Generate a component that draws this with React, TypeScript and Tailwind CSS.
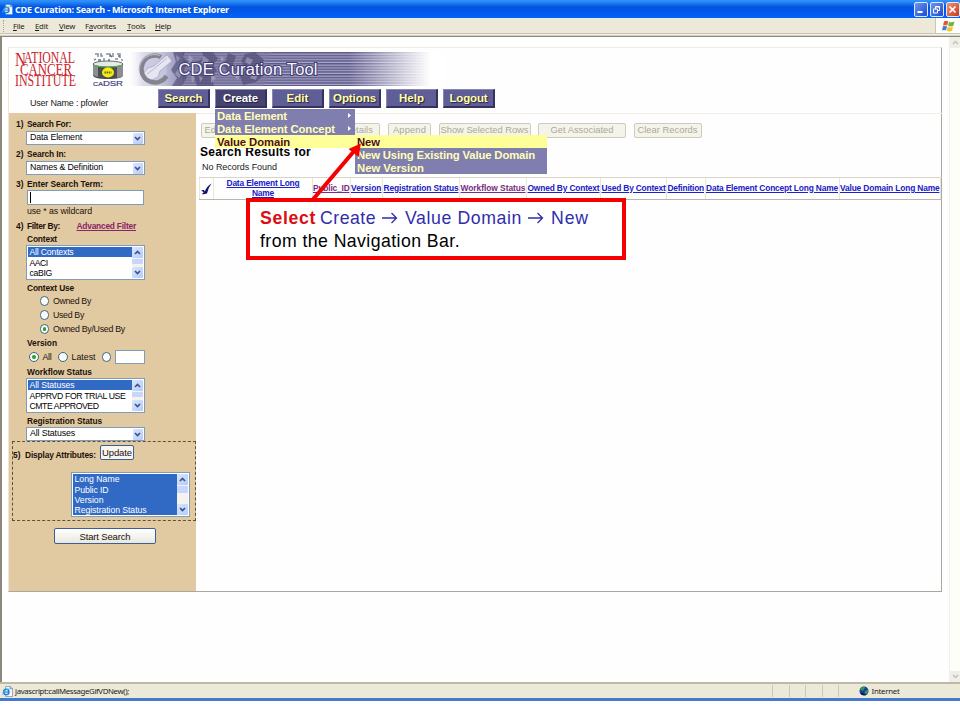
import React, { useLayoutEffect, useRef } from "react";

const clsArial = "font-['Liberation_Sans',Arial,sans-serif]";
const clsTahoma = "font-['Noto_Sans','Open_Sans',sans-serif]";

/* A single line of text tracked so that it fills exactly `w` pixels. */
function Fit({ w, className = "", children }: { w: number; className?: string; children: string }) {
  const ref = useRef<HTMLSpanElement>(null);
  useLayoutEffect(() => {
    const el = ref.current;
    if (!el) return;
    el.style.letterSpacing = "0px";
    const natural = el.getBoundingClientRect().width;
    el.style.letterSpacing = `${(w - natural) / children.length}px`;
  }, [w, children]);
  return (
    <span ref={ref} className={`inline-block whitespace-pre ${className}`}>
      {children}
    </span>
  );
}

function IeIcon({ size }: { size: number }) {
  return (
    <svg width={size} height={size} viewBox="0 0 12 12" className="shrink-0">
      <path d="M4 .5h5L11.500 3v8.500H4z" fill="#f4f8ff" stroke="#5b7fbf" strokeWidth=".7" />
      <path d="M9 .5V3h2.500" fill="#c5d5f0" stroke="#3b62ad" strokeWidth=".6" />
      <circle cx="4.700" cy="6.500" r="2.900" fill="#e8f4ff" stroke="#1f7fd6" strokeWidth="1.600" />
      <path d="M2 6.600h5.500" stroke="#1f7fd6" strokeWidth="1.300" />
      <path d="M.6 9.500C1 6 4 3.500 8.500 3" fill="none" stroke="#49b6ea" strokeWidth=".8" />
    </svg>
  );
}

function TitleBar() {
  const box = "flex h-[15px] w-[14.5px] items-center justify-center rounded-[2px] border border-[#dfe9fb]";
  return (
    <div className="flex h-[18px] shrink-0 items-center bg-linear-to-b from-[#2f90fb] from-5% via-[#0353de] via-40% to-[#0363fb] pl-[2px]">
      <IeIcon size={11} />
      <Fit w={214} className="ml-[2px] font-['Open_Sans',sans-serif] text-[9px] font-bold leading-[17px] text-white">
        CDE Curation: Search - Microsoft Internet Explorer
      </Fit>
      <div className="ml-auto flex gap-[1.500px]">
        <div className={`${box} bg-linear-to-br from-[#6d95f0] to-[#1c49cf]`}>
          <svg width="11" height="11"><path d="M2.500 8h5" stroke="#fff" strokeWidth="2" /></svg>
        </div>
        <div className={`${box} bg-linear-to-br from-[#6d95f0] to-[#1c49cf]`}>
          <svg width="11" height="11" fill="none" stroke="#fff" strokeWidth="1">
            <path d="M2.500 5h4v4h-4zM4.500 5V2.500h4v4H6.500M4.500 3h4" />
          </svg>
        </div>
        <div className={`${box} bg-linear-to-br from-[#ee9274] to-[#c93413]`}>
          <svg width="11" height="11"><path d="M2.500 2.500l6 6M8.500 2.500l-6 6" stroke="#fff" strokeWidth="1.700" /></svg>
        </div>
      </div>
    </div>
  );
}

const menus: [string, string, string, number][] = [
  ["", "F", "ile", 11],
  ["", "E", "dit", 13],
  ["", "V", "iew", 15],
  ["F", "a", "vorites", 31],
  ["", "T", "ools", 17],
  ["", "H", "elp", 15],
];

function MenuBar() {
  return (
    <div className="flex h-[19px] shrink-0 flex-col bg-[#ece9d8]">
      <div className="flex h-[15px] items-center">
        <div className="ml-[3px] h-[12px] w-px border-l border-dotted border-[#a9a595]" />
        <div className={`flex ${clsTahoma} ml-[9px] gap-[11px] text-[7.800px] leading-[14px] text-[#1b1b1b]`}>
          {menus.map(([a, b, c, w]) => (
            <span key={b} className="flex whitespace-nowrap tracking-[-0.250px]" style={{ width: w }}>
              {a}
              <u>{b}</u>
              {c}
            </span>
          ))}
        </div>
        <div className="ml-auto flex h-[15px] w-[25px] items-center justify-center border-l border-[#c9c6b6] bg-white">
          <svg width="13" height="12" viewBox="0 0 13 12">
            <path d="M2 1.500Q4 .2 6.200 1.500L5.200 5.500Q3 4.500 1 5.500z" fill="#e8552b" />
            <path d="M7 1.800Q9.500 3 12.500 1.600L11.300 6Q9 7 6 5.800z" fill="#6fb63c" />
            <path d="M.9 6.300Q3 5.300 5 6.400L4 10.500Q2 9.500 0 10.500z" fill="#3f7de0" />
            <path d="M5.800 6.700Q8.300 8 11 6.800L9.900 11Q7.500 12 4.800 10.800z" fill="#f7c520" />
          </svg>
        </div>
      </div>
      <div className="h-px bg-[#c9c5b6]" />
      <div className="h-px bg-[#f3f0e4]" />
      <div className="h-px bg-[#d8d4c4]" />
      <div className="h-px bg-[#8b887c]" />
    </div>
  );
}

function NciLogo() {
  return (
    <svg width="62" height="36" viewBox="0 0 62 36" fill="#c9252d" fontFamily="'Liberation Serif', serif" className="shrink-0 overflow-visible">
      <text x="0" y="14" fontSize="19" textLength="11" lengthAdjust="spacingAndGlyphs">N</text>
      <text x="9" y="11.300" fontSize="16" textLength="51" lengthAdjust="spacingAndGlyphs">ATIONAL</text>
      <text x="5" y="23" fontSize="17.500" textLength="52" lengthAdjust="spacingAndGlyphs">CANCER</text>
      <text x="0" y="34" fontSize="16" textLength="61" lengthAdjust="spacingAndGlyphs">INSTITUTE</text>
    </svg>
  );
}

function CadsrLogo() {
  return (
    <svg width="34" height="36" viewBox="0 0 34 36" className="shrink-0 overflow-visible">
      <g fill="none" strokeWidth="1.500">
        <path d="M4 2h3v3M10 1v3h2M15 2h4v3M22 1v4M26 2h3v4M3 8l2-1M30 8h2M13 6v3M24 7h3" stroke="#8b8e9a" />
        <path d="M7 8h3M18 7v2M28 3v2M19 3l2 2" stroke="#57719a" />
      </g>
      <path d="M2 12v11q0 4 15 4t15-4V12z" fill="#4b4d4f" />
      <path d="M2 12v10q0 2 5 3V13zM26 14v12q6-1 6-3V12z" fill="#8c8e90" />
      <ellipse cx="17" cy="12" rx="15" ry="3" fill="#e4ebe4" stroke="#3f4a40" strokeWidth=".8" />
      <path d="M3 13.500q14 3.500 28 0" fill="none" stroke="#58b648" strokeWidth="1.200" />
      <ellipse cx="17" cy="20.500" rx="6" ry="5" fill="#f5ec16" />
      <path d="M13.500 20.500h7" stroke="#6c6a16" strokeWidth="2" strokeDasharray="1.500 .6" />
      <text x="2" y="34" fontSize="8" fontFamily="'Liberation Sans', sans-serif" fill="#3b3b80" stroke="#3b3b80" strokeWidth=".2" textLength="30" lengthAdjust="spacingAndGlyphs">
        <tspan fontSize="6">CA</tspan>DSR
      </text>
    </svg>
  );
}

function Banner() {
  return (
    <svg width="316" height="34" viewBox="0 0 316 34" className="shrink-0">
      <defs>
        <pattern id="stripes" width="4" height="2.750" patternUnits="userSpaceOnUse">
          <rect width="4" height="2.750" fill="#a9a6c8" />
          <rect width="4" height="1.500" fill="#5d5988" />
        </pattern>
        <linearGradient id="left">
          <stop offset="0" stopColor="#f0eff7" />
          <stop offset=".6" stopColor="#c3c3dc" />
          <stop offset="1" stopColor="#8f8db4" />
        </linearGradient>
        <linearGradient id="fade">
          <stop offset="0" stopColor="#fff" stopOpacity="0" />
          <stop offset=".85" stopColor="#fff" />
        </linearGradient>
        <linearGradient id="edge">
          <stop offset="0" stopColor="#fff" />
          <stop offset="1" stopColor="#fff" stopOpacity="0" />
        </linearGradient>
      </defs>
      <rect width="316" height="34" fill="url(#stripes)" />
      <rect width="54" height="34" fill="url(#left)" />
      <rect width="14" height="34" fill="url(#edge)" />
      <path d="M54 0h90l-8 10 6 12-8 12H54z" fill="#7f7ca2" opacity=".55" />
      <g fill="#4b4770" opacity=".6">
        <path d="M44 0l12 0-2 5 5 5-4 8 3 7-5 9H43l5-8-6-8 5-8z" />
        <path d="M73 0h11l5 7-5 5 4 7-6 5 3 10H68l-3-9 5-7-3-8 8-4z" />
        <path d="M99 1l8 3-3 8 4 6-9 4-4-8z" />
        <path d="M116 2l10-2 9 8-4 6 4 9-8 7-13 3-3-9 6-7-5-8z" />
      </g>
      <g fill="#b4b1ca" opacity=".55">
        <path d="M47 3l4 3-3 4zM49 17l4 4-3 5-4-4zM75 4l5 4-3 6-5-3zM82 22l5 4-5 5zM70 24l4 2-3 4zM118 5l6 3-3 5-5-3zM124 21l5-1-2 8-6-2zM60 3l4 3-2 5-3-3zM91 4l4 2-2 5zM105 24l6-3-2 7zM62 23l4 3-3 5z" />
      </g>
      <circle cx="25" cy="17" r="13" fill="#c9c8df" opacity=".7" />
      <path d="M13 23l6-7 6-2 13-11 5 6-12 10-2 6-8 4z" fill="#e6e5f1" stroke="#a2a0bf" strokeWidth=".7" />
      <path d="M18 22l8-6 12-10" fill="none" stroke="#b8b6d0" strokeWidth="1" />
      <path d="M32 5A13.500 13.500 0 1 0 37.500 24" fill="none" stroke="#84848e" strokeWidth="4.500" />
      <path d="M31 3.500A15 15 0 0 0 10.500 19" fill="none" stroke="#b5b5c0" strokeWidth="1.300" />
      <rect x="220" width="96" height="34" fill="url(#fade)" />
      <g fontFamily="'Liberation Sans', Arial, sans-serif" fontSize="16.500">
        <text
          x="49.500"
          y="22.500"
          fill="#f8f7ff"
          stroke="#403c70"
          strokeWidth="2"
          paintOrder="stroke"
          textLength="139"
        >
          CDE Curation Tool
        </text>
      </g>
    </svg>
  );
}

const nav: [string, number][] = [
  ["Search", 38],
  ["Create", 35],
  ["Edit", 22],
  ["Options", 43],
  ["Help", 25],
  ["Logout", 38],
];

function NavBar() {
  return (
    <div className="flex h-[19px] gap-[5px]">
      {nav.map(([label, w]) => (
        <div
          key={label}
          className={`flex w-[52px] items-center justify-center border-t border-r-2 border-b-2 border-l border-t-[#8886b2] border-l-[#8886b2] border-r-[#35335e] border-b-[#35335e] ${
            label === "Create" ? "bg-[#45436f] text-white" : "bg-[#605e96] text-[#ffffa5]"
          }`}
        >
          <Fit w={w} className="text-[11.500px] font-bold leading-[15px] [text-shadow:1px_1px_1px_#222045]">
            {label}
          </Fit>
        </div>
      ))}
    </div>
  );
}

function MenuRow({ label, w, hot, arrow }: { label: string; w: number; hot?: boolean; arrow?: boolean }) {
  return (
    <div className={`flex h-[13px] items-center pl-[2px] ${hot ? "bg-[#ffff99] text-[#4d1016]" : "bg-[#807eae] text-[#ffffb5]"}`}>
      <Fit w={w} className="text-[11.300px] font-bold leading-[12px]">{label}</Fit>
      {arrow && (
        <svg width="3" height="5" className="mr-[4px] ml-auto">
          <path d="M0 0L3 2.500L0 5z" fill="#fff" />
        </svg>
      )}
    </div>
  );
}

function CreateMenu() {
  return (
    <div className="absolute top-[109px] left-[215px] z-10 flex items-end">
      <div className="mb-[26px] w-[140px]">
        <MenuRow label="Data Element" w={70} arrow />
        <MenuRow label="Data Element Concept" w={118} arrow />
        <MenuRow label="Value Domain" w={73} hot />
      </div>
      <div className="w-[192px]">
        <MenuRow label="New" w={23} hot />
        <MenuRow label="New Using Existing Value Domain" w={178} />
        <MenuRow label="New Version" w={67} />
      </div>
    </div>
  );
}

function Chevron({ up = false }: { up?: boolean }) {
  return (
    <span className="flex h-[11px] w-full shrink-0 items-center justify-center rounded-[1px] bg-linear-to-br from-[#dbe6fe] to-[#b3cbfb]">
      <svg width="7" height="5" fill="none" stroke="#3d5486" strokeWidth="1.700">
        <path d={up ? "M1 4L3.500 1.500L6 4" : "M1 1L3.500 3.500L6 1"} />
      </svg>
    </span>
  );
}

function Select({ text, w }: { text: string; w: number }) {
  return (
    <div className="ml-[17px] flex h-[14px] w-[119px] items-center border border-[#7f9db9] bg-white pr-px pl-[3px]">
      <Fit w={w} className="mb-px text-[8.800px] leading-[11px] text-black">{text}</Fit>
      <span className="ml-auto w-[10.500px]"><Chevron /></span>
    </div>
  );
}

function ListBox({ items, className, all }: { items: [string, number][]; className: string; all?: boolean }) {
  return (
    <div className={`flex border border-[#7f9db9] bg-white p-px ${className}`}>
      <div className="grow overflow-hidden">
        {items.map(([t, w], i) => (
          <div key={t} className={`flex h-[10.350px] items-center pl-[1.500px] ${all || i === 0 ? "bg-[#316ac5] text-white" : "text-black"}`}>
            <Fit w={w} className="text-[8.700px] leading-[10px]">{t}</Fit>
          </div>
        ))}
      </div>
      <div className="flex w-[11px] flex-col bg-[#f4f3ee]">
        <Chevron up />
        <span className={`mt-px rounded-[1px] bg-[#c6d6fc] ${all ? "h-[7px]" : "h-[5px]"}`} />
        <span className="mt-auto"><Chevron /></span>
      </div>
    </div>
  );
}

function Label({ text, w, className = "" }: { text: string; w: number; className?: string }) {
  return (
    <div className={`flex h-[11px] items-center ${className}`}>
      <Fit w={w} className="text-[8.400px] font-bold leading-[11px]">{text}</Fit>
    </div>
  );
}

function Numbered({ n, text, w, className = "" }: { n: string; text: string; w: number; className?: string }) {
  return (
    <div className={`flex pl-[7px] ${className}`}>
      <Label text={n} w={7.5} className="w-[11px]" />
      <Label text={text} w={w} />
    </div>
  );
}

function Radio({ on }: { on?: boolean }) {
  return (
    <span className="flex size-[9.500px] shrink-0 items-center justify-center rounded-full border border-[#3b6583] bg-[#fbfbf8]">
      {on && <span className="size-[3.500px] rounded-full bg-[#22a122]" />}
    </span>
  );
}

function RadioRow({ text, w, on }: { text: string; w: number; on?: boolean }) {
  return (
    <div className="flex h-[14px] items-center pl-[30.500px]">
      <Radio on={on} />
      <Fit w={w} className="ml-[4px] text-[8.800px] leading-[12px]">{text}</Fit>
    </div>
  );
}

function Sidebar() {
  return (
    <div className="flex h-full w-[186.500px] shrink-0 flex-col bg-[#e1c9a2] text-[#1c130a]">
      <Numbered n="1)" text="Search For:" w={44} className="mt-[6px] mb-px" />
      <Select text="Data Element" w={52} />
      <Numbered n="2)" text="Search In:" w={39} className="mt-[4px] mb-px" />
      <Select text="Names & Definition" w={73} />
      <Numbered n="3)" text="Enter Search Term:" w={76} className="mt-[4px]" />
      <div className="ml-[18px] flex h-[15px] w-[117px] items-center border border-[#7f9db9] bg-white pl-[2px]">
        <span className="h-[11px] w-px bg-black" />
      </div>
      <div className="flex h-[12px] items-center pl-[18px]">
        <Fit w={65} className="text-[8.800px] leading-[12px]">use * as wildcard</Fit>
      </div>
      <div className="mt-[4px] flex">
        <Numbered n="4)" text="Filter By:" w={33} />
        <Label text="Advanced Filter" w={59.5} className="ml-[16.500px] text-[#8b2467] underline" />
      </div>
      <Label text="Context" w={30} className="mt-[2px] ml-[18px]" />
      <ListBox className="ml-[17px] h-[35px] w-[119px]" items={[["All Contexts", 44], ["AACI", 18], ["caBIG", 22.5]]} />
      <Label text="Context Use" w={47} className="mt-[3px] ml-[18px]" />
      <RadioRow text="Owned By" w={38} />
      <RadioRow text="Used By" w={31} />
      <RadioRow text="Owned By/Used By" w={72} on />
      <Label text="Version" w={30} className="mt-[2px] ml-[18px]" />
      <div className="mt-[1px] flex h-[14px] items-center pl-[20px]">
        <Radio on />
        <Fit w={9} className="ml-[4px] text-[8.800px] leading-[12px]">All</Fit>
        <span className="ml-[6.500px]"><Radio /></span>
        <Fit w={24} className="ml-[4px] text-[8.800px] leading-[12px]">Latest</Fit>
        <span className="ml-[6px]"><Radio /></span>
        <span className="ml-[4px] h-[14px] w-[30px] border border-[#7f9db9] bg-white" />
      </div>
      <Label text="Workflow Status" w={65} className="mt-[3px] ml-[18px]" />
      <ListBox
        className="ml-[17px] h-[35px] w-[119px]"
        items={[["All Statuses", 45], ["APPRVD FOR TRIAL USE", 96], ["CMTE APPROVED", 69]]}
      />
      <Label text="Registration Status" w={75} className="mt-[3px] ml-[18px]" />
      <Select text="All Statuses" w={45} />
      <div className="ml-[3px] h-[80px] w-[183.500px] shrink-0 border border-dashed border-[#5d5138]">
        <div className="flex h-[30px]">
          <Label text="5)" w={7.5} className="mt-[8px] w-[12px]" />
          <Label text="Display Attributes:" w={71} className="mt-[8px]" />
          <span className="mt-[3px] ml-[4px] flex h-[15px] w-[34px] items-center justify-center rounded-[2px] border border-[#3d5f8f] bg-[#f7f6f2]">
            <Fit w={30} className="text-[9.500px] leading-[13px]">Update</Fit>
          </span>
        </div>
        <ListBox
          all
          className="ml-[58px] h-[45px] w-[119px]"
          items={[["Long Name", 45], ["Public ID", 34], ["Version", 29], ["Registration Status", 72]]}
        />
      </div>
      <div className="mt-[7px] ml-[45px] flex h-[16px] w-[102px] items-center justify-center rounded-[2px] border border-[#3d5f8f] bg-linear-to-b from-white to-[#e9e7df]">
        <Fit w={51} className="text-[9.500px] leading-[13px]">Start Search</Fit>
      </div>
    </div>
  );
}

const actions: [string, number, string][] = [
  ["Edit", 16, "w-[67px]"],
  ["Details", 29, "w-[107px] justify-end pr-[6px]"],
  ["Append", 33, "ml-[2.500px] w-[43px] justify-center"],
  ["Show Selected Rows", 88, "ml-[2px] w-[92px] justify-center"],
  ["Get Associated", 63, "ml-[2px] w-[88px] justify-center"],
  ["Clear Records", 60, "ml-[2px] w-[68px] justify-center"],
];

const columns: [string, number, string, boolean?][] = [
  ["Public_ID", 36.5, "w-[37.500px]", true],
  ["Version", 30.5, "w-[32.500px]"],
  ["Registration Status", 75, "w-[77px]"],
  ["Workflow Status", 65, "w-[67px]", true],
  ["Owned By Context", 72, "w-[74px]"],
  ["Used By Context", 64, "w-[66px]"],
  ["Definition", 36.5, "w-[38.500px]"],
  ["Data Element Concept Long Name", 132, "w-[134px]"],
  ["Value Domain Long Name", 99.5, "w-[101.500px]"],
];

function Results() {
  return (
    <div className="ml-[3.500px] flex grow flex-col">
      <div className="mt-[9px] ml-[1.500px] flex h-[15px] gap-[5.500px]">
        {actions.map(([t, w, cls]) => (
          <div key={t} className={`flex shrink-0 items-center rounded-[2px] border border-[#cfccbc] bg-[#f5f4ea] px-[3px] text-[#aaa899] ${cls}`}>
            <Fit w={w} className="text-[9.300px] leading-[13px]">{t}</Fit>
          </div>
        ))}
      </div>
      <div className="mt-[7px] ml-[1px] flex h-[14px] items-center">
        <Fit w={111} className="text-[12px] font-bold leading-[14px] text-black">Search Results for</Fit>
      </div>
      <div className="mt-[1px] ml-[3px] flex h-[13px] items-center">
        <Fit w={75} className="text-[9px] leading-[12px] text-[#222]">No Records Found</Fit>
      </div>
      <div className="mt-[4px] flex h-[23px] w-[742.500px] border-t border-b border-[#d8d4c6] border-b-[#b9b6aa]">
        <div className="flex w-[15px] items-center justify-center border-r border-l border-[#ebe6d8]">
          <svg width="11" height="12" viewBox="0 0 11 12" className="shrink-0">
            <path d="M0 7.200L3 7L3.800 8.500Q6 3 10.500 .5Q7 5 6 10.500L1.500 11.500V10L3 9.500z" fill="#10106a" />
          </svg>
        </div>
        <div className="flex w-[99px] flex-col items-center border-r border-[#ebe6d8] text-[#2020c8] underline">
          <Fit w={73} className="text-[8.400px] font-bold leading-[10px]">Data Element Long</Fit>
          <Fit w={22} className="text-[8.400px] font-bold leading-[10px]">Name</Fit>
        </div>
        {columns.map(([t, w, cls, visited]) => (
          <div key={t} className={`flex shrink-0 items-center justify-center border-r border-[#ebe6d8] pb-px underline ${cls} ${visited ? "text-[#7c2a83]" : "text-[#2020c8]"}`}>
            <Fit w={w} className="text-[8.400px] font-bold leading-[11px]">{t}</Fit>
          </div>
        ))}
      </div>
    </div>
  );
}

function ArrowRight() {
  return (
    <svg width="16" height="12" className="ml-[6px] shrink-0" fill="none" stroke="#302daa" strokeWidth="1.300">
      <path d="M0 6h14.500M9.500 1L14.500 6L9.500 11" />
    </svg>
  );
}

function Callout() {
  return (
    <>
      <div className="absolute top-[198px] left-[246px] z-20 flex h-[62px] w-[380px] flex-col justify-center border-4 border-[#f40000] bg-white pt-px pl-[10px]">
        <div className="flex h-[23px] items-center text-[17.700px]">
          <Fit w={56} className="font-bold text-[#dc0d12]">Select</Fit>
          <Fit w={56} className="ml-[4px] text-[#302daa]">Create</Fit>
          <ArrowRight />
          <Fit w={117} className="ml-[7px] text-[#302daa]">Value Domain</Fit>
          <ArrowRight />
          <Fit w={38} className="ml-[7px] text-[#302daa]">New</Fit>
        </div>
        <div className="flex h-[23px] items-center text-[17.700px]">
          <Fit w={200} className="text-black">from the Navigation Bar.</Fit>
        </div>
      </div>
      <svg width="60" height="64" viewBox="305 140 60 64" className="absolute top-[140px] left-[305px] z-30">
        <path d="M312.500 200L355 150" stroke="#f40000" strokeWidth="4" />
        <path d="M360.800 143.500L348.500 149L358.800 157z" fill="#f40000" />
      </svg>
    </>
  );
}

function ScrollBar() {
  const btn = "flex h-[11px] items-center justify-center bg-[#efeee8]";
  return (
    <div className="flex w-[11px] shrink-0 flex-col justify-between border-l border-[#f1f0ea] bg-[#fdfdfa]">
      <span className={btn}>
        <svg width="7" height="5" fill="none" stroke="#c5c3b8" strokeWidth="1.500"><path d="M1 4L3.500 1.500L6 4" /></svg>
      </span>
      <span className={btn}>
        <svg width="7" height="5" fill="none" stroke="#c5c3b8" strokeWidth="1.500"><path d="M1 1L3.500 3.500L6 1" /></svg>
      </span>
    </div>
  );
}

function StatusBar() {
  return (
    <div className={`flex h-[16px] shrink-0 items-center border-t-2 border-[#bdb9a6] bg-[#ece9d8] pl-[2px] ${clsTahoma} text-[7.800px] text-[#1b1b1b]`}>
      <IeIcon size={11} />
      <Fit w={114} className="ml-[2px] leading-[14px]">javascript:callMessageGifVDNew();</Fit>
      <div className="ml-auto flex h-[12px] w-[188px] items-center">
        {[0, 1, 2, 3, 4].map((i) => (
          <span key={i} className="h-full w-[16.500px] border-l border-[#cbc7b5]" />
        ))}
        <span className="flex h-full items-center pl-[4px]">
          <svg width="10" height="10" viewBox="0 0 10 10">
            <circle cx="5" cy="5" r="4.500" fill="#173a9c" />
            <path d="M1 3Q3 0 6 1L5 4L3 5zM6 5L9 3.500Q9.500 6 7.500 8.500L5.500 7z" fill="#2f9a56" />
            <path d="M1 7Q4 10 7 9L4 7z" fill="#0b1b3f" />
          </svg>
          <Fit w={28} className="ml-[3px] leading-[14px]">Internet</Fit>
        </span>
      </div>
    </div>
  );
}

export default function App() {
  return (
    <div className={`relative flex h-[720px] w-[960px] flex-col overflow-hidden bg-white ${clsArial}`}>
      <TitleBar />
      <MenuBar />
      <div className="flex h-[645px] shrink-0 border-l-2 border-[#8b887c] bg-[#fefefe]">
        <div className="mt-[10px] ml-[6px] flex h-[545px] w-[934px] shrink-0 flex-col border border-t-[#f0ebe2] border-r-[#aaa79f] border-b-[#aaa79f] border-l-[#f0e6d8]">
          <div className="flex h-[65px] shrink-0 flex-col">
            <div className="mt-[4px] ml-[6px] flex h-[34px] items-start">
              <NciLogo />
              <span className="ml-[14px]"><CadsrLogo /></span>
              <span className="ml-[4px]"><Banner /></span>
            </div>
            <div className="mt-[3px] flex">
              <div className="flex w-[149px] items-end pl-[21px]">
                <Fit w={78} className="text-[9px] leading-[10px] text-[#222]">User Name : pfowler</Fit>
              </div>
              <NavBar />
            </div>
          </div>
          <div className="flex grow">
            <Sidebar />
            <div className="flex grow border-t border-[#f2eee4]">
              <Results />
            </div>
          </div>
        </div>
        <div className="ml-auto flex"><ScrollBar /></div>
      </div>
      <StatusBar />
      <div className="h-[3px] shrink-0 bg-[#427bc9]" />
      <CreateMenu />
      <Callout />
    </div>
  );
}
